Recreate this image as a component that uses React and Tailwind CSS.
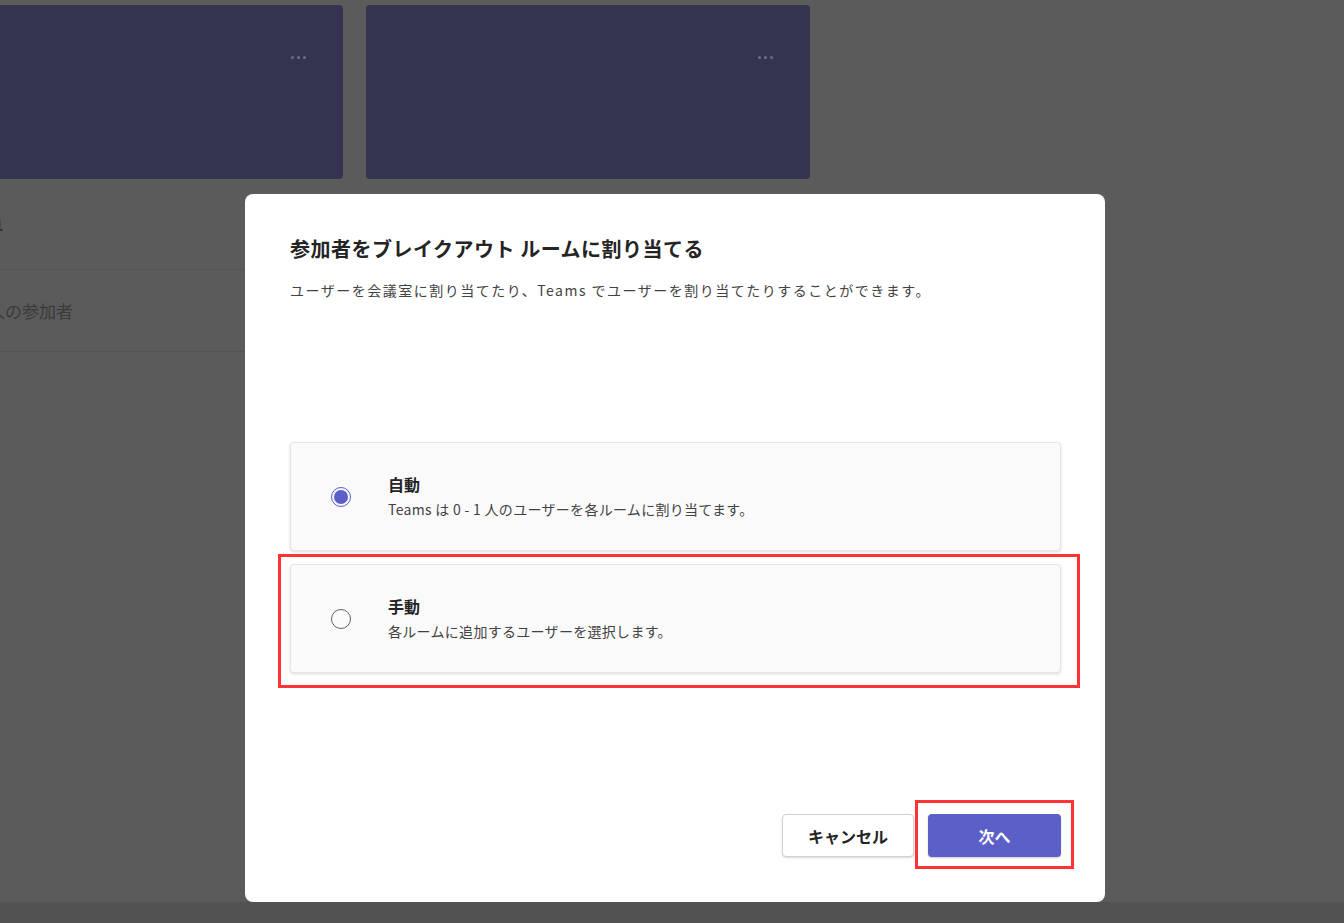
import React from 'react';

const font = { fontFamily: '"Noto Sans CJK JP", "Noto Sans", sans-serif' };

function RoomCard({ className }) {
    return (
        <div className={'relative h-[174px] rounded-[4px] bg-[#343450] ' + className}>
            <div className="absolute right-[37px] top-[51px] flex gap-[3px]">
                <div className="w-[3px] h-[3px] rounded-full bg-[#6e6e84]"></div>
                <div className="w-[3px] h-[3px] rounded-full bg-[#6e6e84]"></div>
                <div className="w-[3px] h-[3px] rounded-full bg-[#6e6e84]"></div>
            </div>
        </div>
    );
}

function Radio({ checked }) {
    if (checked) {
        return (
            <div className="w-[20px] h-[20px] rounded-full border border-[#5b5fc7] flex items-center justify-center shrink-0">
                <div className="w-[14px] h-[14px] rounded-full bg-[#5b5fc7]"></div>
            </div>
        );
    }
    return <div className="w-[20px] h-[20px] rounded-full border border-[#616161] shrink-0"></div>;
}

function Option({ checked, title, desc }) {
    return (
        <div className="h-[109px] rounded-[4px] bg-[#fafafa] border border-[#e6e6e6] shadow-[0_1px_3px_rgba(0,0,0,0.15)] flex items-center pl-[40px]">
            <Radio checked={checked} />
            <div className="ml-[37px] -mt-[2px]">
                <div className="text-[16px] leading-[22px] font-bold text-[#242424]">{title}</div>
                <div className="text-[14px] leading-[20px] text-[#424242] mt-[4px] tracking-[0.3px]">{desc}</div>
            </div>
        </div>
    );
}

export default function App() {
    return (
        <div className="relative w-[1344px] h-[923px] overflow-hidden bg-[#5b5b5b]" style={font}>
            {/* background meeting view */}
            <div className="flex gap-[23px] pt-[5px]">
                <RoomCard className="w-[444px] -ml-[101px]" />
                <RoomCard className="w-[444px]" />
            </div>
            <div className="w-[245px] overflow-hidden">
                <div className="h-[91px] flex items-center border-b border-[#535353]">
                    <div className="-ml-[6px] text-[16px] font-bold text-[#2e2e2e]">1</div>
                </div>
                <div className="h-[82px] flex items-center border-b border-[#535353]">
                    <div className="-ml-[12px] text-[17px] text-[#3a3a3a]">人の参加者</div>
                </div>
            </div>
            <div className="absolute left-0 right-0 bottom-0 h-[21px] bg-[#525252]"></div>

            {/* dialog */}
            <div className="absolute left-[245px] top-[194px] w-[860px] h-[708px] rounded-[8px] bg-white flex flex-col pl-[45px] pr-[44px] pt-[40px] pb-[45px]">
                <h2 className="text-[20px] leading-[30px] font-bold text-[#242424] tracking-[0.5px]">参加者をブレイクアウト ルームに割り当てる</h2>
                <p className="text-[14px] leading-[20px] text-[#424242] mt-[16px] tracking-[1.5px]">ユーザーを会議室に割り当てたり、Teams でユーザーを割り当てたりすることができます。</p>

                <div className="mt-[142px] flex flex-col gap-[13px]">
                    <Option checked title="自動" desc="Teams は 0 - 1 人のユーザーを各ルームに割り当てます。" />
                    <Option title="手動" desc="各ルームに追加するユーザーを選択します。" />
                </div>

                <div className="mt-auto flex justify-end gap-[14px]">
                    <button className="w-[132px] h-[43px] rounded-[4px] border border-[#d1d1d1] bg-white shadow-[0_1px_2px_rgba(0,0,0,0.15)] text-[16px] font-bold text-[#242424]">キャンセル</button>
                    <button className="w-[133px] h-[43px] rounded-[4px] bg-[#5b5fc7] shadow-[0_1px_2px_rgba(0,0,0,0.2)] text-[16px] font-bold text-white">次へ</button>
                </div>
            </div>

            {/* red annotation boxes */}
            <div className="absolute left-[278px] top-[554px] w-[802px] h-[134px] border-[3px] border-[#ff3333]"></div>
            <div className="absolute left-[915px] top-[800px] w-[159px] h-[69px] border-[3px] border-[#ff3333]"></div>
        </div>
    );
}
